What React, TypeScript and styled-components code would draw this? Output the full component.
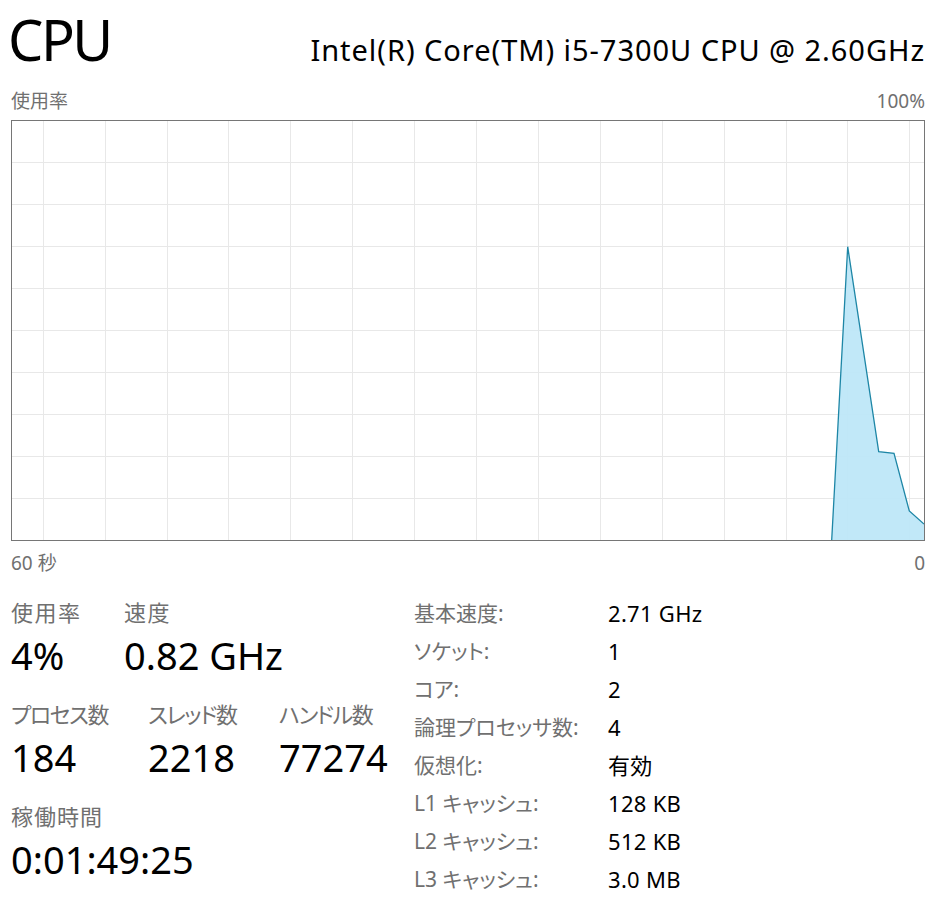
import React from "react";
import styled, { createGlobalStyle } from "styled-components";

const GlobalStyle = createGlobalStyle`
  html, body { margin: 0; padding: 0; background: #ffffff; }
  body {
    font-family: "Noto Sans", "Noto Sans CJK JP", sans-serif;
    font-feature-settings: "palt";
    color: #000;
  }
`;

const Page = styled.div`
  width: 945px;
  box-sizing: border-box;
  padding: 7px 20px 0 11px;
`;

const Header = styled.div`
  display: flex;
  justify-content: space-between;
  align-items: baseline;
  height: 64px;
`;

const Title = styled.div`
  font-size: 56px;
  line-height: 64px;
  letter-spacing: -2.5px;
  margin-left: -3px;
  color: #000;
`;

const Model = styled.div`
  font-size: 29px;
  line-height: 64px;
  letter-spacing: 0.95px;
  color: #000;
`;

const AxisRow = styled.div<{ $top: number; $bottom: number }>`
  display: flex;
  justify-content: space-between;
  margin-top: ${(p) => p.$top}px;
  margin-bottom: ${(p) => p.$bottom}px;
  font-size: 19px;
  line-height: 24px;
  color: #707070;
`;

const ChartBox = styled.div`
  box-sizing: border-box;
  width: 914px;
  height: 421px;
  border: 1px solid #767676;
  background: #fff;
`;

const ChartSvg = styled.svg`
  display: block;
  width: 912px;
  height: 419px;
`;

const Stats = styled.div`
  display: grid;
  grid-template-columns: 403px 1fr;
  margin-top: 19px;
`;

const LeftCol = styled.div`
  padding-top: 4px;
`;

const StatGroup = styled.div`
  display: flex;
  margin-bottom: 23px;
`;

const StatItem = styled.div<{ $w: number }>`
  width: ${(p) => p.$w}px;
  display: flex;
  flex-direction: column;
  gap: 7px;
`;

const StatLabel = styled.div<{ $ls?: number }>`
  font-size: 22px;
  line-height: 28px;
  letter-spacing: ${(p) => p.$ls ?? 0}px;
  color: #707070;
  white-space: nowrap;
`;

const StatValue = styled.div`
  font-size: 38px;
  line-height: 44px;
  color: #000;
  white-space: nowrap;
`;

const InfoGrid = styled.div`
  display: grid;
  grid-template-columns: 194px auto;
  grid-auto-rows: 38px;
  align-content: start;
`;

const InfoLabel = styled.div`
  font-size: 21px;
  line-height: 38px;
  color: #707070;
  white-space: nowrap;
`;

const InfoValue = styled.div`
  font-size: 22px;
  line-height: 38px;
  letter-spacing: 0.3px;
  color: #000;
  white-space: nowrap;
`;

const INNER_W = 912;
const INNER_H = 419;

const hLines = Array.from({ length: 9 }, (_, k) => Math.round(41 + 42 * k) + 0.5);
const vLines = Array.from({ length: 15 }, (_, k) => Math.round(30.7 + 61.9 * k) + 0.5);

const graphPoints: [number, number][] = [
  [819.7, INNER_H],
  [835.7, 125.7],
  [866.7, 330.7],
  [882, 332.3],
  [897.3, 390],
  [INNER_W, 403],
];

const Chart: React.FC = () => {
  const line = graphPoints.map(([x, y]) => `${x},${y}`).join(" ");
  const area = `${line} ${INNER_W},${INNER_H}`;
  return (
    <ChartBox>
      <ChartSvg viewBox={`0 0 ${INNER_W} ${INNER_H}`}>
        {hLines.map((y) => (
          <line key={`h${y}`} x1={0} x2={INNER_W} y1={y} y2={y} stroke="#e8e8e8" strokeWidth={1} />
        ))}
        {vLines.map((x) => (
          <line key={`v${x}`} x1={x} x2={x} y1={0} y2={INNER_H} stroke="#e8e8e8" strokeWidth={1} />
        ))}
        <polygon points={area} fill="#bce6f7" fillOpacity={0.92} />
        <polyline points={line} fill="none" stroke="#1d86a6" strokeWidth={1.3} strokeLinejoin="miter" />
      </ChartSvg>
    </ChartBox>
  );
};

const info: [string, string][] = [
  ["基本速度:", "2.71 GHz"],
  ["ソケット:", "1"],
  ["コア:", "2"],
  ["論理プロセッサ数:", "4"],
  ["仮想化:", "有効"],
  ["L1 キャッシュ:", "128 KB"],
  ["L2 キャッシュ:", "512 KB"],
  ["L3 キャッシュ:", "3.0 MB"],
];

export default function App() {
  return (
    <>
      <GlobalStyle />
      <Page>
        <Header>
          <Title>CPU</Title>
          <Model>Intel(R) Core(TM) i5-7300U CPU @ 2.60GHz</Model>
        </Header>
        <AxisRow $top={18} $bottom={7}>
          <span>使用率</span>
          <span>100%</span>
        </AxisRow>
        <Chart />
        <AxisRow $top={10} $bottom={0}>
          <span>60 秒</span>
          <span>0</span>
        </AxisRow>
        <Stats>
          <LeftCol>
            <StatGroup>
              <StatItem $w={113}>
                <StatLabel $ls={1.5}>使用率</StatLabel>
                <StatValue>4%</StatValue>
              </StatItem>
              <StatItem $w={200}>
                <StatLabel $ls={1.5}>速度</StatLabel>
                <StatValue>0.82 GHz</StatValue>
              </StatItem>
            </StatGroup>
            <StatGroup>
              <StatItem $w={137}>
                <StatLabel $ls={-1.5}>プロセス数</StatLabel>
                <StatValue>184</StatValue>
              </StatItem>
              <StatItem $w={131}>
                <StatLabel $ls={-1.5}>スレッド数</StatLabel>
                <StatValue>2218</StatValue>
              </StatItem>
              <StatItem $w={130}>
                <StatLabel $ls={-1.5}>ハンドル数</StatLabel>
                <StatValue>77274</StatValue>
              </StatItem>
            </StatGroup>
            <StatGroup>
              <StatItem $w={300}>
                <StatLabel $ls={1}>稼働時間</StatLabel>
                <StatValue>0:01:49:25</StatValue>
              </StatItem>
            </StatGroup>
          </LeftCol>
          <InfoGrid>
            {info.map(([k, v]) => (
              <React.Fragment key={k}>
                <InfoLabel>{k}</InfoLabel>
                <InfoValue>{v}</InfoValue>
              </React.Fragment>
            ))}
          </InfoGrid>
        </Stats>
      </Page>
    </>
  );
}
